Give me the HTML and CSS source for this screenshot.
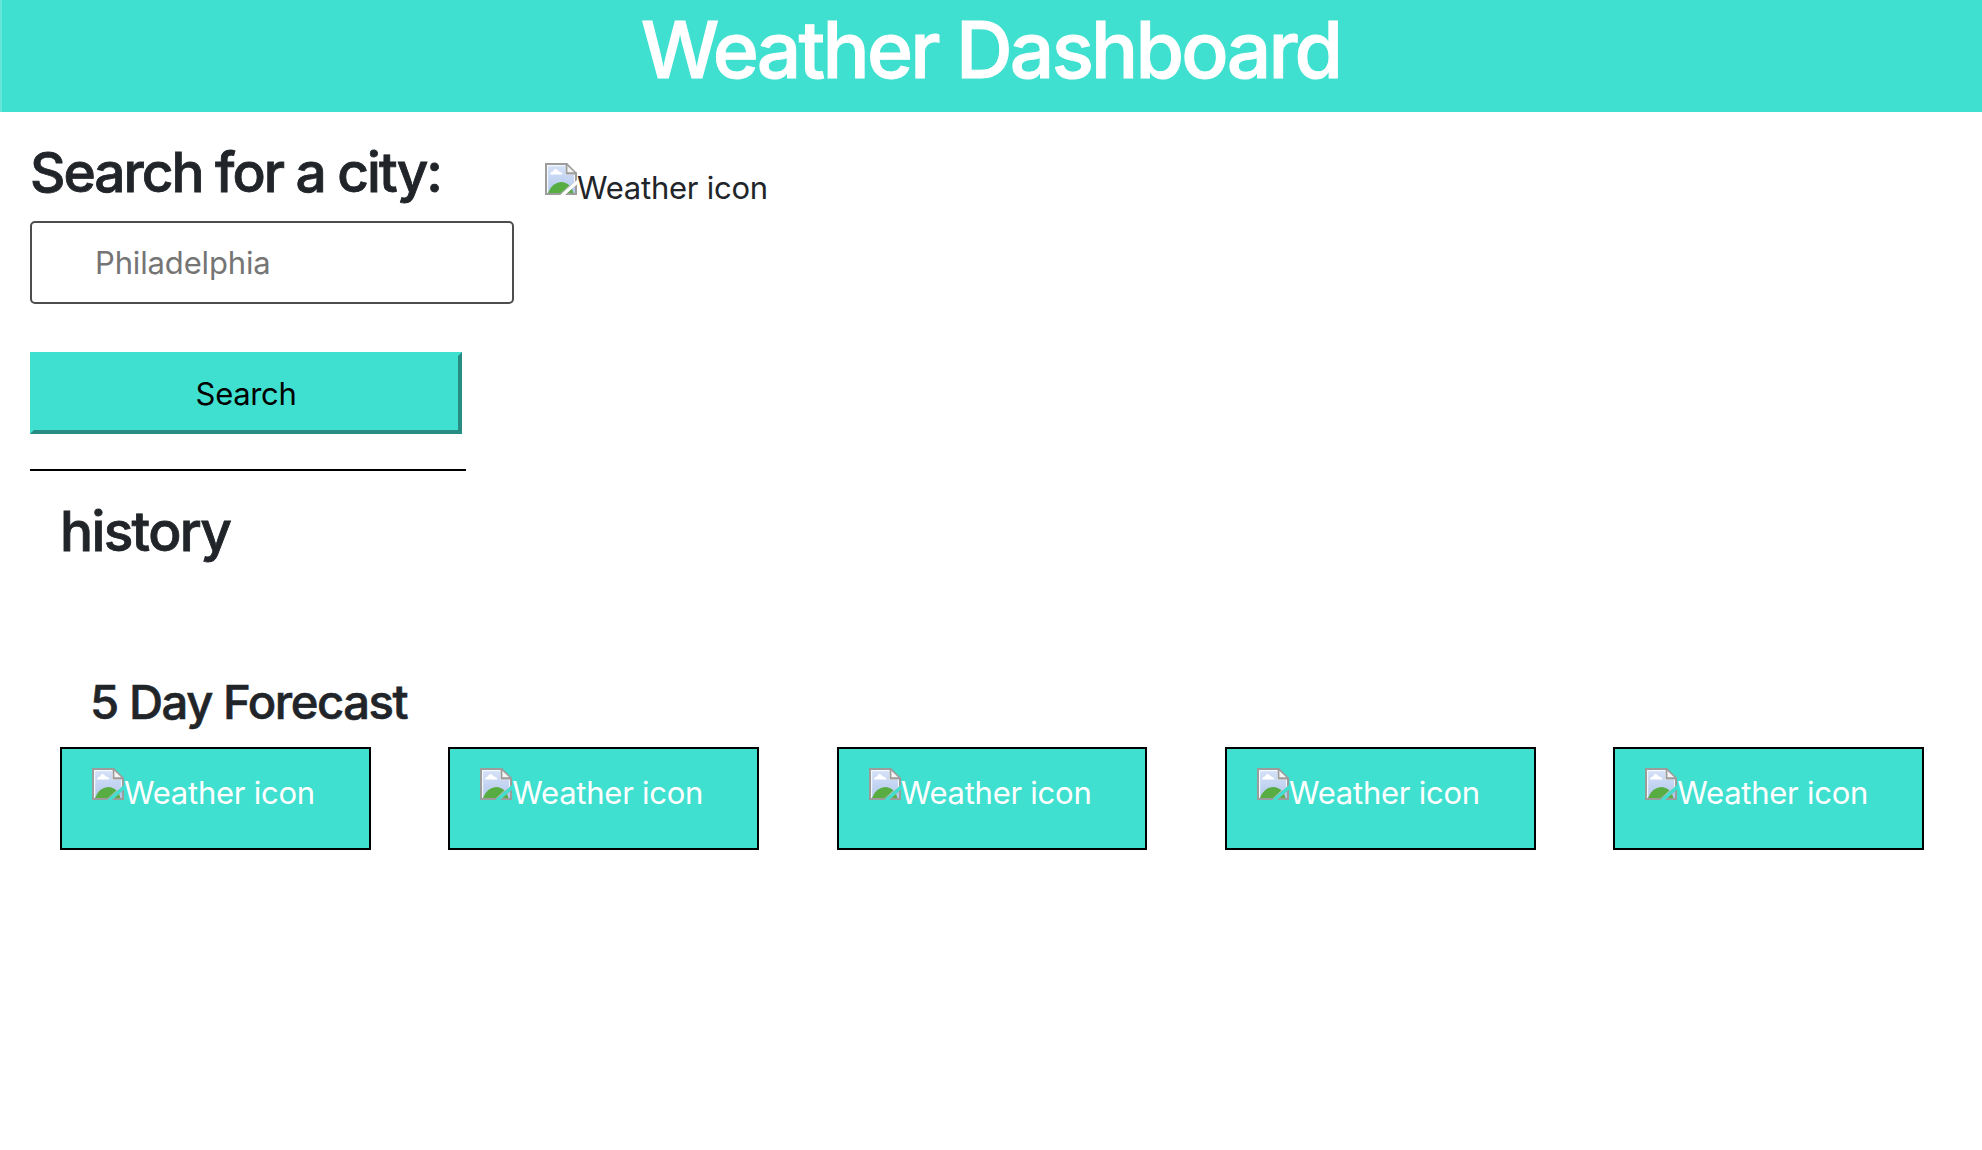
FILE: index.html
```html
<!DOCTYPE html>
<html lang="en">
<head>
<meta charset="utf-8">
<title>Weather Dashboard</title>
<link rel="stylesheet" href="styles.css">
</head>
<body>
<svg class="defs" width="0" height="0" aria-hidden="true">
  <defs>
    <linearGradient id="sky" x1="0" y1="0" x2="0" y2="1"><stop offset="0" stop-color="#d3e0f7"/><stop offset="1" stop-color="#b4c9ee"/></linearGradient>
    <symbol id="broken" viewBox="0 0 32 32">
      <path d="M0 0H22L32 10V17L15 32H0Z" fill="#9c9c9c"/>
      <path d="M2 2H21V11H30V18.500L16 30H2Z" fill="#f4f7fc"/>
      <path d="M3.200 3.200H20V12H29V19L16 30H3.200Z" fill="url(#sky)"/>
      <path d="M22 2.500V9.500H29.500Z" fill="#f4f4f4"/>
      <path d="M21.500 0V10.500H32" fill="none" stroke="#9c9c9c" stroke-width="1.800"/>
      <path d="M5 11.500Q5.500 8.500 8 8.500Q9.500 5 12 6.500Q13.500 8.500 15.500 9Q17.500 9.500 17.500 11.500Z" fill="#fff"/>
      <path d="M3 30Q7 19.500 16 19Q21 19 24.500 22.500L16 30Z" fill="#58ad42"/>
      <path d="M0 30H17L15 32H0Z" fill="#9c9c9c"/>
      <path d="M32 21.500V32H20Z" fill="#9c9c9c"/>
      <path d="M30 23.500V30H22.500Z" fill="#b4c9ee"/>
      <path d="M22.500 30L27 26L28.500 30Z" fill="#58ad42"/>
    </symbol>
  </defs>
</svg>
<header class="header"><h1 class="title">Weather Dashboard</h1></header>
<main>
  <div class="top">
    <aside class="side">
      <h2 class="search-title">Search for a city:</h2>
      <input class="city" type="text" placeholder="Philadelphia">
      <button class="search">Search</button>
      <div class="rule"></div>
      <h2 class="history">history</h2>
    </aside>
    <section class="current"><svg class="icon"><use href="#broken"/></svg><span class="alt">Weather icon</span></section>
  </div>
  <section class="forecast">
    <h3 class="forecast-title">5 Day Forecast</h3>
    <div class="cards">
      <div class="card"><svg class="icon"><use href="#broken"/></svg><span class="alt">Weather icon</span></div>
      <div class="card"><svg class="icon"><use href="#broken"/></svg><span class="alt">Weather icon</span></div>
      <div class="card"><svg class="icon"><use href="#broken"/></svg><span class="alt">Weather icon</span></div>
      <div class="card"><svg class="icon"><use href="#broken"/></svg><span class="alt">Weather icon</span></div>
      <div class="card"><svg class="icon"><use href="#broken"/></svg><span class="alt">Weather icon</span></div>
    </div>
  </section>
</main>
</body>
</html>
```
FILE: styles.css
```css
* { box-sizing: border-box; }
body {
  margin: 0;
  background: #fff;
  color: #212529;
  font: 400 31px/48px Inter, "Liberation Sans", sans-serif;
  letter-spacing: -0.25px;
}
h1, h2, h3 { margin: 0; font-weight: 500; -webkit-text-stroke: 0.6px currentColor; }
.defs { display: block; }
.header {
  height: 112px;
  background: #40e0d0;
  border-left: 2px solid #62e6d9;
  color: #fff;
  text-align: center;
}
.title { padding-right: 3px; font-size: 78.500px; line-height: 99px; letter-spacing: -2.8px; -webkit-text-stroke-width: 1px; }
.top { display: flex; height: 561px; }
.side { width: 515px; padding: 27px 0 0 30px; }
.search-title, .history { font-size: 55px; line-height: 67px; }
.search-title { letter-spacing: -2.03px; -webkit-text-stroke-width: 0.8px; }
.city {
  display: block;
  width: 484px;
  height: 83px;
  margin-top: 15px;
  padding: 0 63px;
  border: 2px solid #4d4d4d;
  border-radius: 5px;
  background: #fff;
  font: inherit;
  letter-spacing: -0.15px;
}
.city::placeholder { color: #757575; opacity: 1; }
.search {
  display: block;
  width: 432px;
  height: 82px;
  margin-top: 48px;
  padding: 2px 0 0;
  border: 4px solid #40e0d0;
  border-right-color: #288c82;
  border-bottom-color: #288c82;
  background: #40e0d0;
  color: #000;
  font: inherit;
  letter-spacing: -0.35px;
}
.rule { width: 436px; height: 2px; margin-top: 35px; background: #000; }
.history { margin: 27px 0 0 30px; letter-spacing: -1.65px; -webkit-text-stroke-width: 0.8px; }
.current { display: flex; align-items: flex-start; padding: 51px 0 0 30px; }
.icon { display: block; flex: none; width: 32px; height: 32px; }
.alt { padding-top: 1px; white-space: nowrap; }
.forecast { padding: 0 58px 0 60px; }
.forecast-title { padding-left: 30px; font-size: 47.200px; line-height: 58px; letter-spacing: -1.43px; }
.cards { display: flex; justify-content: space-between; margin-top: 16px; }
.card {
  display: flex;
  align-items: flex-start;
  width: 16.6667%;
  height: 103px;
  padding: 19px 0 0 30px;
  border: 2px solid #000;
  background: #40e0d0;
  color: #fff;
}
```
